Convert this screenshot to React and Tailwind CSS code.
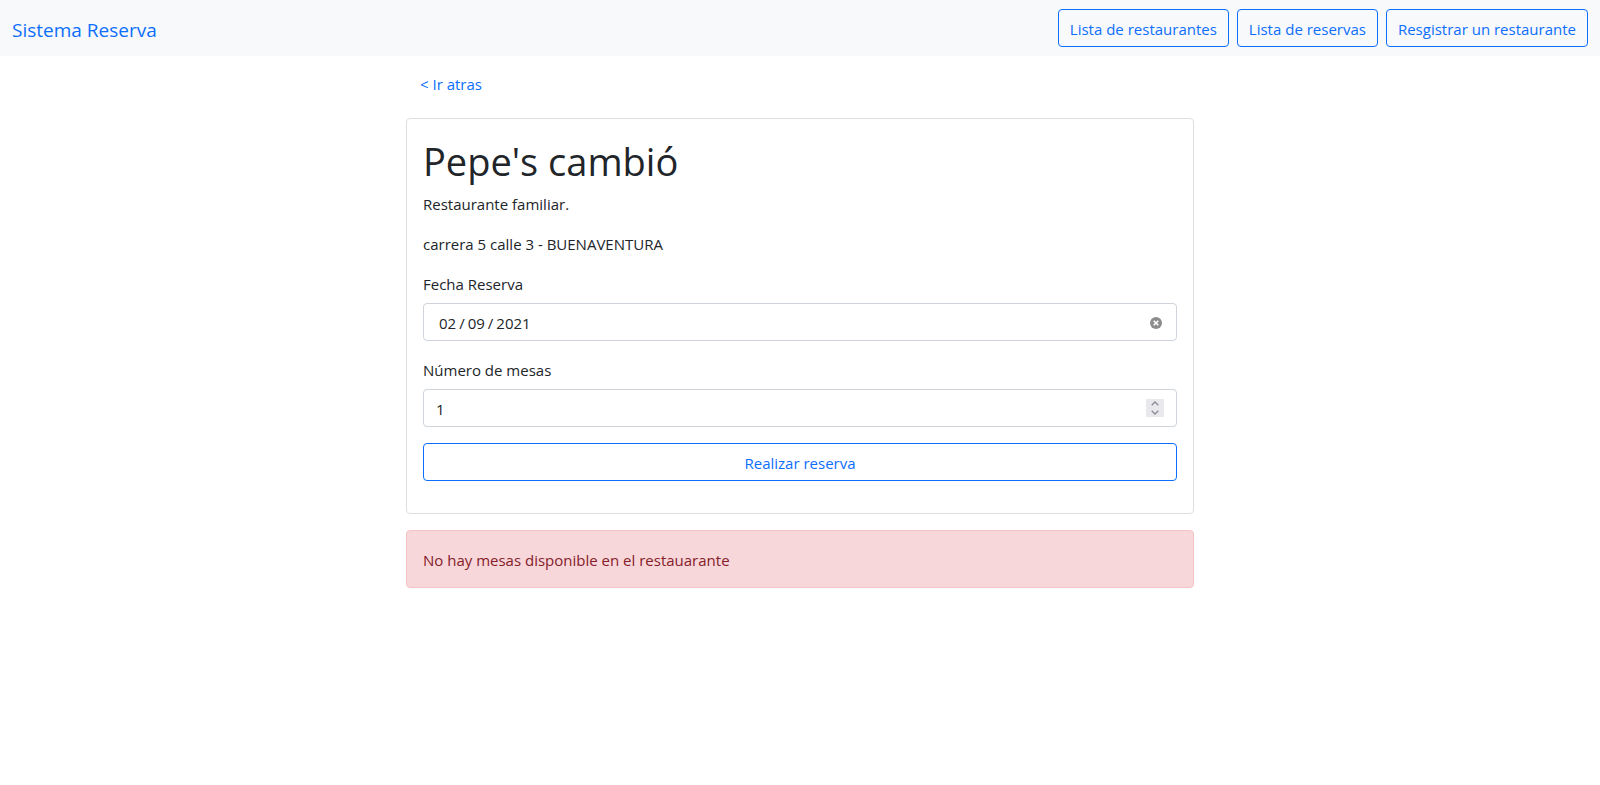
import { useState } from "react";

const outlineButton =
  "rounded border border-[#0d6efd] px-[11px] h-[38px] pt-0.5 text-[15px] leading-6 text-[#0d6efd] hover:bg-[#0d6efd] hover:text-white";

const field =
  "block h-[38px] w-full rounded border border-[#ced4da] bg-white px-3 pt-0.5 text-[15px] leading-6 text-[#212529] outline-none focus:border-[#86b7fe]";

const textLine = "pt-0.5 leading-[22px]";

function Navbar() {
  return (
    <nav className="flex min-h-14 flex-wrap items-center justify-between gap-2 bg-[#f8f9fa] px-3 py-2">
      <a href="#inicio" className="pt-1 text-[19px] leading-7 text-[#0d6efd]">
        Sistema Reserva
      </a>
      <div className="flex flex-wrap gap-2">
        <button type="button" className={outlineButton}>Lista de restaurantes</button>
        <button type="button" className={outlineButton}>Lista de reservas</button>
        <button type="button" className={outlineButton}>Resgistrar un restaurante</button>
      </div>
    </nav>
  );
}

function DateField() {
  const [date, setDate] = useState("2021-02-09");
  return (
    <div className="mb-4">
      <label htmlFor="fecha" className={`${textLine} mb-2 block`}>Fecha Reserva</label>
      <div className="relative">
        <input
          id="fecha"
          type="date"
          value={date}
          onChange={(e) => setDate(e.target.value)}
          className={`${field} [&::-webkit-calendar-picker-indicator]:hidden [&::-webkit-datetime-edit]:pl-0.5 [&::-webkit-datetime-edit-text]:px-0.5`}
        />
        <button
          type="button"
          aria-label="Borrar fecha"
          onClick={() => setDate("")}
          className="absolute inset-y-0 right-[15px] flex items-center pt-0.5"
        >
          <svg viewBox="0 0 12 12" className="size-3">
            <circle cx="6" cy="6" r="6" fill="#8c8c8c" />
            <path d="M3.7 3.7 8.3 8.3M8.3 3.7 3.7 8.3" stroke="#fff" strokeWidth="1.6" />
          </svg>
        </button>
      </div>
    </div>
  );
}

function TablesField() {
  const [count, setCount] = useState(1);
  return (
    <div className="mb-4">
      <label htmlFor="mesas" className={`${textLine} mb-2 block`}>Número de mesas</label>
      <div className="relative">
        <input
          id="mesas"
          type="number"
          value={count}
          onChange={(e) => setCount(Number(e.target.value))}
          className={`${field} [appearance:textfield] [&::-webkit-inner-spin-button]:appearance-none`}
        />
        <div className="absolute inset-y-0 right-[13px] flex items-center">
          <div className="flex size-[18px] flex-col bg-[#e9e9ed] text-[#8f8f9d]">
            <button type="button" aria-label="Aumentar" onClick={() => setCount(count + 1)} className="flex h-[9px] items-center justify-center">
              <svg viewBox="0 0 8 5" className="h-[5px] w-2" fill="none" stroke="currentColor" strokeWidth="1.4">
                <path d="M.7 4.3 4 1l3.3 3.3" />
              </svg>
            </button>
            <button type="button" aria-label="Disminuir" onClick={() => setCount(count - 1)} className="flex h-[9px] items-center justify-center">
              <svg viewBox="0 0 8 5" className="h-[5px] w-2" fill="none" stroke="currentColor" strokeWidth="1.4">
                <path d="M.7.7 4 4 7.3.7" />
              </svg>
            </button>
          </div>
        </div>
      </div>
    </div>
  );
}

export default function App() {
  return (
    <div className="font-['Open_Sans','Noto_Sans',sans-serif] text-[15px] leading-6 text-[#212529]">
      <Navbar />
      <main className="mx-auto w-1/2 px-1.5 pt-2">
        <a href="#atras" className="mb-4 inline-flex h-[38px] items-center px-3.5 pt-0.5 text-[#0d6efd]">
          &lt; Ir atras
        </a>
        <section className="mb-4 rounded border border-[#dfdfdf] p-4">
          <h1 className="mb-2 pt-1 text-[38px] leading-[44px]">Pepe's cambió</h1>
          <p className={`${textLine} mb-4`}>Restaurante familiar.</p>
          <p className={`${textLine} mb-4`}>carrera 5 calle 3 - BUENAVENTURA</p>
          <form className="mb-4" onSubmit={(e) => e.preventDefault()}>
            <DateField />
            <TablesField />
            <button type="submit" className={`${outlineButton} w-full`}>Realizar reserva</button>
          </form>
        </section>
        <div role="alert" className="rounded border border-[#f5c2c7] bg-[#f8d7da] p-4 text-[#842029]">
          <p className={textLine}>No hay mesas disponible en el restauarante</p>
        </div>
      </main>
    </div>
  );
}
